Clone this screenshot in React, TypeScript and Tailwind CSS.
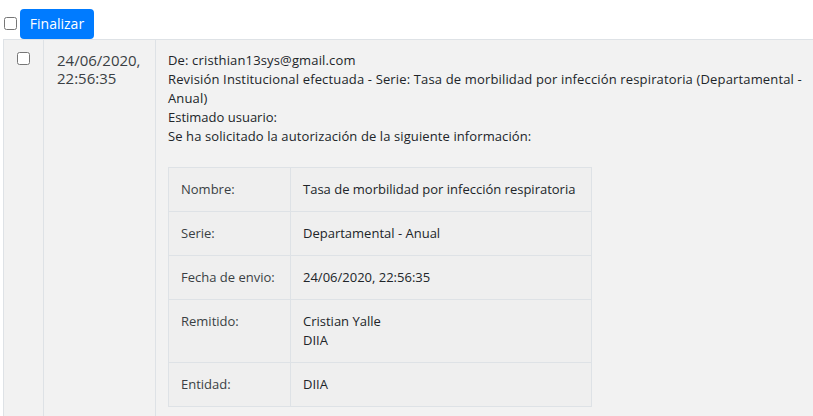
import React from "react";

const rows = [
  { label: "Nombre:", value: ["Tasa de morbilidad por infección respiratoria"] },
  { label: "Serie:", value: ["Departamental - Anual"] },
  { label: "Fecha de envio:", value: ["24/06/2020, 22:56:35"] },
  { label: "Remitido:", value: ["Cristian Yalle", "DIIA"] },
  { label: "Entidad:", value: ["DIIA"] },
];

export default function App() {
  return (
    <div className="bg-white text-[#212529] text-[13px] leading-[19px] font-['Open_Sans',sans-serif] w-[813px] h-[416px] overflow-hidden">
      <div className="flex items-end pt-[9px]">
        <input type="checkbox" className="ml-[4px] mr-[3px] mb-[9px] w-[13px] h-[13px]" />
        <button
          type="button"
          className="bg-[#007bff] text-white text-[14px] rounded-[4px] h-[30px] w-[74px] leading-[30px]"
        >
          Finalizar
        </button>
      </div>

      <table className="ml-[3px] w-[820px] border-collapse bg-[#f2f2f2]">
        <tbody>
          <tr>
            <td className="align-top border border-[#dee2e6] w-[40px] pt-[12px] pl-[13px]">
              <input type="checkbox" className="w-[13px] h-[13px] block" />
            </td>
            <td className="align-top border border-[#dee2e6] w-[112px] px-[13px] pt-[11px] text-[15px] leading-[18px] text-[#3a3f44]">
              24/06/2020,
              <br />
              22:56:35
            </td>
            <td className="align-top border border-[#dee2e6] pl-[12px] pr-[10px] pt-[11px] pb-[12px]">
              <div className="tracking-[0.15px]">De: cristhian13sys@gmail.com</div>
              <div className="w-[640px] tracking-[0.15px]">
                Revisión Institucional efectuada - Serie: Tasa de morbilidad por infección respiratoria (Departamental -
                Anual)
              </div>
              <div>Estimado usuario:</div>
              <div className="tracking-[0.1px]">Se ha solicitado la autorización de la siguiente información:</div>

              <table className="mt-[21px] w-[424px] border-collapse bg-[#efefef]">
                <tbody>
                  {rows.map((r) => (
                    <tr key={r.label}>
                      <td className="align-top border border-[#dee2e6] w-[122px] px-[12px] py-[12px] text-[#3a3f44]">
                        {r.label}
                      </td>
                      <td className="align-top border border-[#dee2e6] px-[12px] py-[12px] pb-[24px] last:pb-[12px]">
                        {r.value.map((v) => (
                          <div key={v}>{v}</div>
                        ))}
                      </td>
                    </tr>
                  ))}
                </tbody>
              </table>
            </td>
          </tr>
        </tbody>
      </table>
    </div>
  );
}
